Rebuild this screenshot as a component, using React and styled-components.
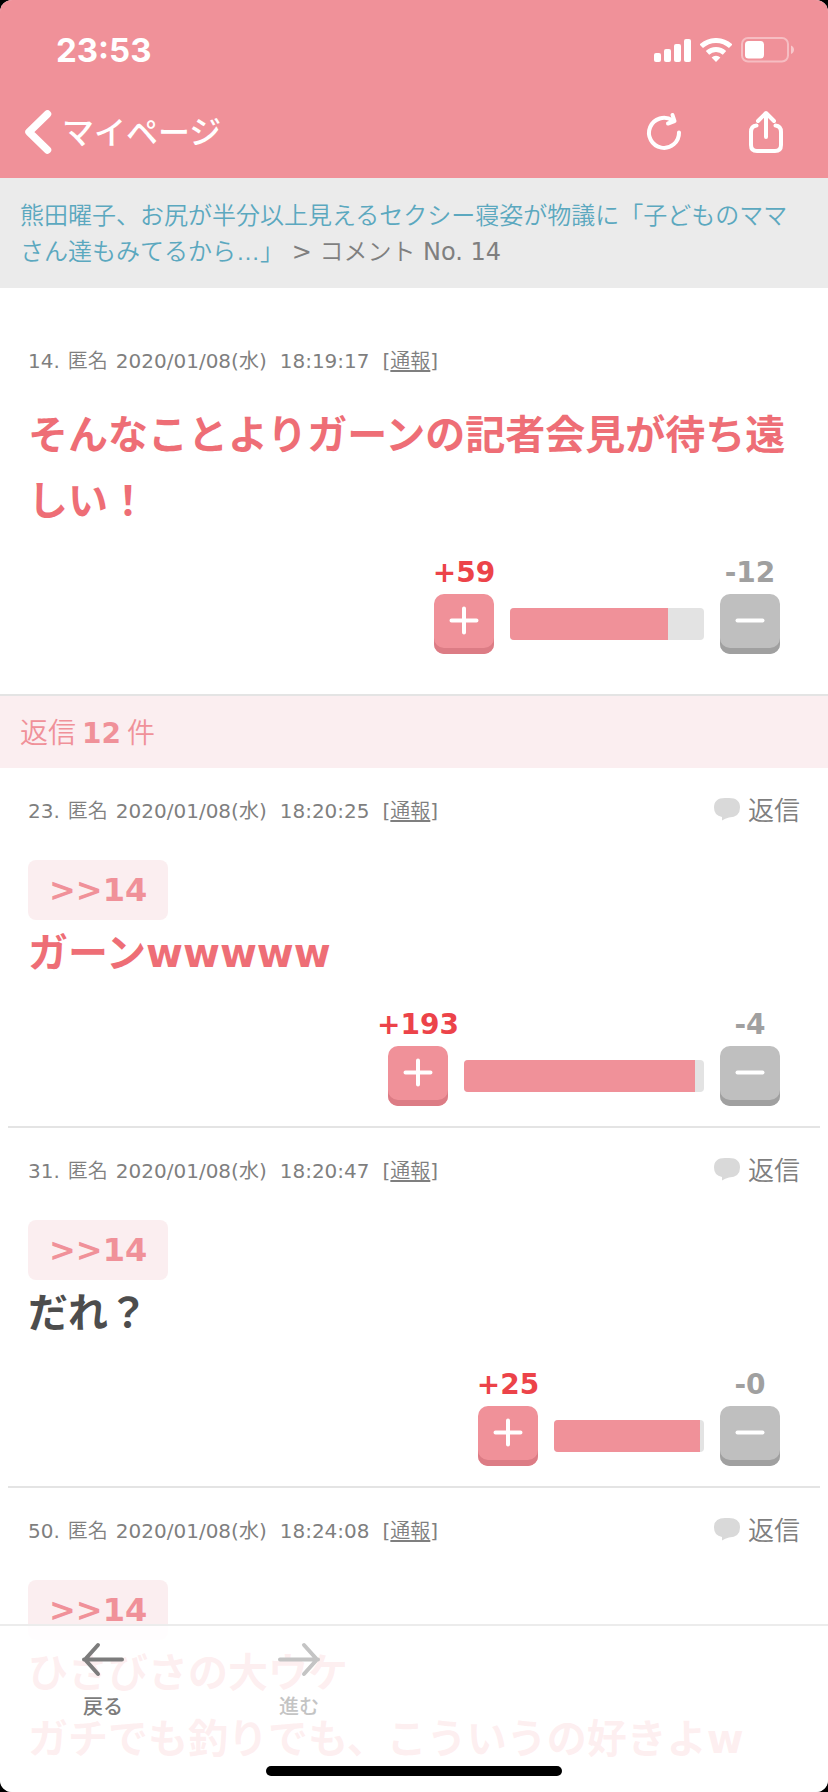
import React from "react";
import styled, { createGlobalStyle } from "styled-components";

const GlobalStyle = createGlobalStyle`
  * {
    box-sizing: border-box;
  }

  body {
    margin: 0;
    background: #000;
    font-family: "DejaVu Sans", "Noto Sans CJK JP", sans-serif;
    color: #7f7f7f;
  }

  button {
    border: 0;
    padding: 0;
    background: none;
    font: inherit;
    color: inherit;
    cursor: pointer;
  }

  svg {
    display: block;
    flex-shrink: 0;
  }
`;

const Screen = styled.div`
  position: relative;
  display: flex;
  flex-direction: column;
  height: 100vh;
  overflow: hidden;
  border-radius: 12px;
  background: #fff;
`;

const Header = styled.header`
  flex-shrink: 0;
  background: #f09199;
  color: #fff;
`;

const StatusBar = styled.div`
  display: flex;
  align-items: center;
  justify-content: space-between;
  height: 86px;
  padding: 14px 34px 0 56px;
`;

const Clock = styled.span`
  font-family: Inter, sans-serif;
  font-size: 33px;
  font-weight: 700;
`;

const StatusIcons = styled.div`
  display: flex;
  align-items: center;
  gap: 9px;
`;

const NavBar = styled.nav`
  display: flex;
  align-items: center;
  justify-content: space-between;
  height: 92px;
  padding: 0 42px 0 24px;
`;

const BackButton = styled.button`
  display: flex;
  align-items: center;
  gap: 10px;
  font-family: "Noto Sans CJK JP", sans-serif;
  font-size: 32px;
  font-weight: 500;
`;

const BackLabel = styled.span`
  padding-bottom: 4px;
`;

const NavActions = styled.div`
  display: flex;
  align-items: center;
  gap: 62px;
`;

const Content = styled.main`
  flex: 1;
  min-height: 0;
  overflow-y: auto;
  scrollbar-width: none;
`;

const Breadcrumb = styled.div`
  padding: 20px 20px 18px;
  background: #ebebeb;
  font-size: 24px;
  line-height: 36px;
`;

const Thin = styled.span`
  font-family: "Liberation Sans", "Noto Sans CJK JP", sans-serif;
  font-weight: 350;
`;

const TopicLink = styled(Thin)`
  color: #5ba8bf;
  text-decoration: none;
`;

const MainComment = styled.article`
  padding: 57px 28px 40px;
  border-bottom: 2px solid #e4e4e4;
`;

const ReplyComment = styled.article`
  margin: 0 8px;
  padding: 27px 20px 20px;
  border-bottom: 2px solid #e4e4e4;
`;

const MetaRow = styled.div`
  display: flex;
  align-items: center;
  justify-content: space-between;
  height: 32px;
  margin-bottom: ${(props) => (props.$reply ? 33 : 25)}px;
`;

const Meta = styled.div`
  display: flex;
  gap: 13px;
  font-size: 20px;
  line-height: 32px;
`;

const MetaGroup = styled.div`
  display: flex;
  gap: 8px;
`;

const ReportLink = styled(Thin)`
  color: inherit;
  text-decoration: underline;
  text-underline-offset: 2px;
`;

const ReplyButton = styled.button`
  display: flex;
  align-items: center;
  gap: 8px;
  font-size: 26px;
  line-height: 32px;
`;

const Anchor = styled.a`
  display: block;
  width: fit-content;
  padding: 0 21px;
  border-radius: 8px;
  background: #fbeef0;
  color: #f09199;
  font-size: 32px;
  font-weight: 700;
  line-height: 60px;
  text-decoration: none;
`;

const Body = styled.p`
  margin: 0;
  color: ${(props) => (props.$popular ? "#ee6e76" : "#4d4d4d")};
  font-size: 40px;
  font-weight: 700;
  line-height: 66px;
`;

const Votes = styled.div`
  display: flex;
  align-items: flex-end;
  justify-content: flex-end;
  gap: 16px;
  margin-top: 20px;
  padding-right: 20px;
`;

const VoteColumn = styled.div`
  display: flex;
  flex-direction: column;
  align-items: center;
  gap: 2px;
  width: 60px;
`;

const VoteCount = styled.span`
  color: ${(props) => (props.$minus ? "#a0a0a0" : "#ec4349")};
  font-size: 28px;
  font-weight: 700;
  line-height: 38px;
  white-space: nowrap;
`;

const VoteButton = styled.button`
  display: flex;
  align-items: center;
  justify-content: center;
  width: 60px;
  height: 60px;
  border-radius: 10px;
  padding-bottom: 6px;
  background: ${(props) => (props.$minus ? "#bfbfbf" : "#f09199")};
  box-shadow: inset 0 -6px 0 ${(props) => (props.$minus ? "#a0a0a0" : "#dc7c85")};
`;

const VoteBar = styled.div`
  width: ${(props) => props.$width}px;
  height: 32px;
  margin-bottom: 14px;
  border-radius: 4px;
  background: #e3e3e3;
  overflow: hidden;
`;

const VoteFill = styled.div`
  height: 100%;
  background: #f09199;
`;

const ReplyHeading = styled.h2`
  display: flex;
  gap: 6px;
  margin: 0;
  padding: 4px 20px 0;
  background: #fbeef0;
  color: #f09199;
  font-size: 28px;
  font-weight: 400;
  line-height: 68px;
`;

const Toolbar = styled.footer`
  position: absolute;
  right: 0;
  bottom: 0;
  left: 0;
  display: flex;
  flex-direction: column;
  align-items: center;
  gap: 46px;
  padding-bottom: 16px;
  border-top: 2px solid #ececec;
  background: rgba(255, 255, 255, 0.89);
`;

const ToolbarButtons = styled.div`
  display: flex;
  align-self: stretch;
  padding: 15px 5px 0;
`;

const ToolbarButton = styled.button`
  display: flex;
  flex-direction: column;
  align-items: center;
  gap: 15px;
  width: 196px;
  color: #7c7c7c;
  font-family: "Noto Sans CJK JP", sans-serif;
  font-size: 20px;
  font-weight: 500;
  line-height: 28px;

  &:disabled {
    color: #c4c4c4;
  }
`;

const HomeIndicator = styled.div`
  width: 296px;
  height: 10px;
  border-radius: 5px;
  background: #000;
`;

const SignalIcon = () => (
  <svg width="37" height="24" viewBox="0 0 37 24" fill="#fff">
    <rect x="0" y="15" width="7" height="9" rx="2" />
    <rect x="10" y="11" width="7" height="13" rx="2" />
    <rect x="20" y="6" width="7" height="18" rx="2" />
    <rect x="30" y="1" width="7" height="23" rx="2" />
  </svg>
);

const WifiIcon = () => (
  <svg width="32" height="24" viewBox="0 0 32 24" fill="none" stroke="#fff" strokeWidth="5">
    <path d="M1.3 8.3a21.5 21.5 0 0 1 29.4 0" />
    <path d="M7.5 14.9a12.5 12.5 0 0 1 17 0" />
    <path d="M16 24l-4.4-4.4a6.2 6.2 0 0 1 8.8 0z" fill="#fff" stroke="none" />
  </svg>
);

const BatteryIcon = () => (
  <svg width="53" height="26" viewBox="0 0 53 26" fill="none">
    <rect x="1" y="1" width="46" height="23.5" rx="6" stroke="#fff" strokeOpacity="0.4" strokeWidth="2" />
    <rect x="4" y="4" width="19" height="17.5" rx="3.5" fill="#fff" />
    <path d="M50 8.5c4 1.5 4 7 0 8.5z" fill="#fff" fillOpacity="0.5" />
  </svg>
);

const ChevronIcon = () => (
  <svg width="28" height="46" viewBox="0 0 28 46" fill="none" stroke="#fff" strokeWidth="7.5" strokeLinecap="round" strokeLinejoin="round">
    <path d="M23.5 5L5 23l18.5 18" />
  </svg>
);

const RefreshIcon = () => (
  <svg width="40" height="44" viewBox="0 0 40 44" fill="none" stroke="#fff" strokeWidth="4" strokeLinecap="round" strokeLinejoin="round">
    <path d="M35 22.5a15 15 0 1 1-6.5-12" />
    <path d="M28.5 5l2 6.2-6.5 2.3" />
  </svg>
);

const ShareIcon = () => (
  <svg width="40" height="48" viewBox="0 0 40 48" fill="none" stroke="#fff" strokeWidth="4" strokeLinecap="round" strokeLinejoin="round">
    <path d="M10.5 17.5Q5 18 5 24v13q0 6 6 6h18q6 0 6-6V24q0-6-5.5-6.5" />
    <path d="M20 29V6M12 13l8-8 8 8" />
  </svg>
);

const BubbleIcon = () => (
  <svg width="26" height="28" viewBox="0 0 26 28" fill="#d9d9d9">
    <path d="M11 1h4q11 0 11 9.5T15 20.5q-4 1-7 3V20Q0 18.5 0 10.5 0 1 11 1z" />
  </svg>
);

const VoteIcon = ({ plus }) => (
  <svg width="30" height="30" viewBox="0 0 30 30" stroke="#fff" strokeWidth="4" strokeLinecap="round">
    <path d={plus ? "M2.5 14.5h25M15 2.5v24" : "M2.5 14.5h25"} />
  </svg>
);

const ArrowIcon = ({ forward }) => (
  <svg width="42" height="36" viewBox="0 0 42 36" fill="none" stroke="currentColor" strokeWidth="4" strokeLinecap="round" strokeLinejoin="round">
    <path d={forward ? "M2 18.5h38M26 4l13 14.5L26 33" : "M40 18.5H2M16 4L3 18.5 16 33"} />
  </svg>
);

const mainComment = {
  no: 14,
  date: "2020/01/08(水)",
  time: "18:19:17",
  lines: ["そんなことよりガーンの記者会見が待ち遠しい！"],
  popular: true,
  votes: { plus: 59, minus: 12, width: 194, fill: 81.5 },
};

const replies = [
  {
    no: 23,
    date: "2020/01/08(水)",
    time: "18:20:25",
    lines: ["ガーンwwwww"],
    popular: true,
    votes: { plus: 193, minus: 4, width: 240, fill: 96.3 },
  },
  {
    no: 31,
    date: "2020/01/08(水)",
    time: "18:20:47",
    lines: ["だれ？"],
    popular: false,
    votes: { plus: 25, minus: 0, width: 150, fill: 97.5 },
  },
  {
    no: 50,
    date: "2020/01/08(水)",
    time: "18:24:08",
    lines: ["ひさびさの大ウケ", "ガチでも釣りでも、こういうの好きよw"],
    popular: true,
  },
];

const CommentMeta = ({ comment, reply }) => (
  <MetaRow $reply={reply}>
    <Meta>
      <MetaGroup>
        <span>{comment.no}.</span>
        <Thin>匿名</Thin>
        <span>{comment.date}</span>
      </MetaGroup>
      <span>{comment.time}</span>
      <span>
        [
        <ReportLink as="a" href="#report">
          通報
        </ReportLink>
        ]
      </span>
    </Meta>
    {reply && (
      <ReplyButton>
        <BubbleIcon />
        <Thin>返信</Thin>
      </ReplyButton>
    )}
  </MetaRow>
);

const CommentBody = ({ comment }) =>
  comment.lines.map((line) => (
    <Body key={line} $popular={comment.popular}>
      {line}
    </Body>
  ));

const CommentVotes = ({ votes }) => (
  <Votes>
    <VoteColumn>
      <VoteCount>+{votes.plus}</VoteCount>
      <VoteButton aria-label="プラス">
        <VoteIcon plus />
      </VoteButton>
    </VoteColumn>
    <VoteBar $width={votes.width}>
      <VoteFill style={{ width: `${votes.fill}%` }} />
    </VoteBar>
    <VoteColumn>
      <VoteCount $minus>-{votes.minus}</VoteCount>
      <VoteButton $minus aria-label="マイナス">
        <VoteIcon />
      </VoteButton>
    </VoteColumn>
  </Votes>
);

const App = () => {
  return (
    <Screen>
      <GlobalStyle />
      <Header>
        <StatusBar>
          <Clock>23:53</Clock>
          <StatusIcons>
            <SignalIcon />
            <WifiIcon />
            <BatteryIcon />
          </StatusIcons>
        </StatusBar>
        <NavBar>
          <BackButton>
            <ChevronIcon />
            <BackLabel>マイページ</BackLabel>
          </BackButton>
          <NavActions>
            <button aria-label="更新">
              <RefreshIcon />
            </button>
            <button aria-label="共有">
              <ShareIcon />
            </button>
          </NavActions>
        </NavBar>
      </Header>

      <Content>
        <Breadcrumb>
          <TopicLink as="a" href="#topic">
            熊田曜子、お尻が半分以上見えるセクシー寝姿が物議に「子どものママさん達もみてるから…」
          </TopicLink>{" "}
          &gt; <Thin>コメント</Thin> No. 14
        </Breadcrumb>

        <MainComment>
          <CommentMeta comment={mainComment} />
          <CommentBody comment={mainComment} />
          <CommentVotes votes={mainComment.votes} />
        </MainComment>

        <ReplyHeading>
          <Thin>返信</Thin>
          <b>12</b>
          <Thin>件</Thin>
        </ReplyHeading>

        {replies.map((reply) => (
          <ReplyComment key={reply.no}>
            <CommentMeta comment={reply} reply />
            <Anchor href="#comment14">&gt;&gt;14</Anchor>
            <CommentBody comment={reply} />
            {reply.votes && <CommentVotes votes={reply.votes} />}
          </ReplyComment>
        ))}
      </Content>

      <Toolbar>
        <ToolbarButtons>
          <ToolbarButton>
            <ArrowIcon />
            戻る
          </ToolbarButton>
          <ToolbarButton disabled>
            <ArrowIcon forward />
            進む
          </ToolbarButton>
        </ToolbarButtons>
        <HomeIndicator />
      </Toolbar>
    </Screen>
  );
};

export default App;
